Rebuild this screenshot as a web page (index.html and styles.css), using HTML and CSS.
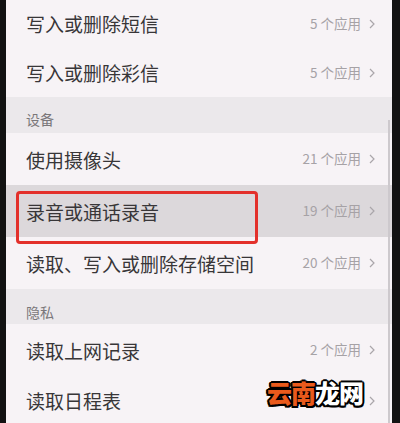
FILE: index.html
```html
<!DOCTYPE html>
<html>
<head>
	<meta charset="utf-8">
	<meta name="viewport" content="width=device-width, initial-scale=1">
	<title>权限管理</title>

	<link rel="stylesheet" href="styles.css">
</head>
<body>

	<div class="screen">
		<div class="list">
			<div class="row row-first">
				<span class="label">写入或删除短信</span>
				<span class="count">5 个应用<svg class="arrow" viewBox="0 0 6 10"><path d="M1 1 L5 5 L1 9"/></svg></span>
			</div>
			<div class="row">
				<span class="label">写入或删除彩信</span>
				<span class="count">5 个应用<svg class="arrow" viewBox="0 0 6 10"><path d="M1 1 L5 5 L1 9"/></svg></span>
			</div>

			<div class="section">设备</div>
			<div class="row row-tall">
				<span class="label">使用摄像头</span>
				<span class="count">21 个应用<svg class="arrow" viewBox="0 0 6 10"><path d="M1 1 L5 5 L1 9"/></svg></span>
			</div>
			<div class="row row-active">
				<span class="label">录音或通话录音</span>
				<span class="count">19 个应用<svg class="arrow" viewBox="0 0 6 10"><path d="M1 1 L5 5 L1 9"/></svg></span>
				<div class="mark"></div>
			</div>
			<div class="row row-tall">
				<span class="label">读取、写入或删除存储空间</span>
				<span class="count">20 个应用<svg class="arrow" viewBox="0 0 6 10"><path d="M1 1 L5 5 L1 9"/></svg></span>
			</div>

			<div class="section section-short">隐私</div>
			<div class="row row-tall">
				<span class="label">读取上网记录</span>
				<span class="count">2 个应用<svg class="arrow" viewBox="0 0 6 10"><path d="M1 1 L5 5 L1 9"/></svg></span>
			</div>
			<div class="row">
				<span class="label">读取日程表</span>
				<span class="count"><svg class="arrow" viewBox="0 0 6 10"><path d="M1 1 L5 5 L1 9"/></svg></span>
			</div>
		</div>

		<div class="scrollbar"></div>
		<div class="logo"><span class="logo-a">云南</span><span class="logo-b">龙网</span></div>
	</div>

</body>
</html>
```

FILE: styles.css
```css
*{
	margin: 0;
	padding: 0;
	box-sizing: border-box;
}
body{
	background: #121212;
	height: 423px;
	overflow: hidden;
	font-family: "Noto Sans CJK SC", "Noto Sans", sans-serif;
}
.screen{
	position: relative;
	margin-left: 6px;
	width: 386px;
	height: 423px;
	background: #f7f3f6;
	overflow: hidden;
}
.list{
	display: flex;
	flex-direction: column;
}
.row{
	position: relative;
	display: flex;
	align-items: center;
	justify-content: space-between;
	height: 49px;
	padding: 0 17px 0 20px;
}
.row-first{
	margin-top: -1px;
}
.row-tall{
	height: 52px;
}
.row-active{
	height: 52px;
	background: #dcd8db;
}
.label{
	font-size: 19px;
	color: #383638;
	line-height: 1;
}
.count{
	display: flex;
	align-items: center;
	font-size: 13.5px;
	color: #a6a2a6;
	line-height: 1;
}
.arrow{
	width: 6px;
	height: 10px;
	margin-left: 8px;
	fill: none;
	stroke: #aaa6aa;
	stroke-width: 1.2;
}
.section{
	height: 36px;
	padding: 15px 0 0 20px;
	background: #ebe8eb;
	font-size: 14px;
	color: #7a777a;
	line-height: 1;
}
.section-short{
	height: 35px;
	padding-top: 16px;
}
.mark{
	position: absolute;
	left: 10px;
	top: 6px;
	width: 242px;
	height: 53px;
	border: 3px solid #e3302b;
	border-radius: 4px;
}
.scrollbar{
	position: absolute;
	left: 382px;
	top: 120px;
	width: 2px;
	height: 303px;
	background: #cdc9cd;
}
.logo{
	position: absolute;
	left: 261px;
	top: 380px;
	font-size: 25px;
	font-weight: 900;
	line-height: 1;
	letter-spacing: -1px;
	text-shadow: -1.5px -1.5px 0 #000, 1.5px -1.5px 0 #000, -1.5px 1.5px 0 #000, 1.5px 1.5px 0 #000, 0 2px 0 #000, 0 -2px 0 #000, 2px 0 0 #000, -2px 0 0 #000;
}
.logo-a{
	color: #ea5a1c;
}
.logo-b{
	color: #ffffff;
}
```
